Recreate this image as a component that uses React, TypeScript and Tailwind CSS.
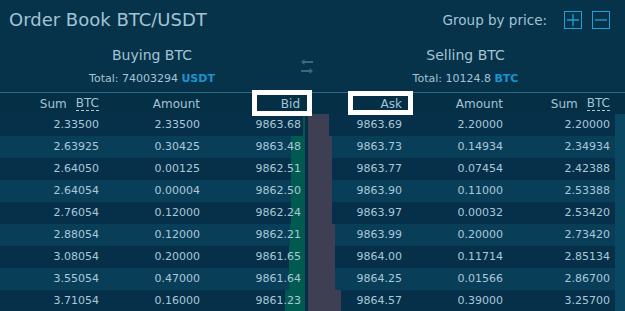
import React from "react";

const bids = [
  { sum: "2.33500", amount: "2.33500", price: "9863.68", depth: 2 },
  { sum: "2.63925", amount: "0.30425", price: "9863.48", depth: 14 },
  { sum: "2.64050", amount: "0.00125", price: "9862.51", depth: 14 },
  { sum: "2.64054", amount: "0.00004", price: "9862.50", depth: 14 },
  { sum: "2.76054", amount: "0.12000", price: "9862.24", depth: 14 },
  { sum: "2.88054", amount: "0.12000", price: "9862.21", depth: 15 },
  { sum: "3.08054", amount: "0.20000", price: "9861.65", depth: 16 },
  { sum: "3.55054", amount: "0.47000", price: "9861.64", depth: 16 },
  { sum: "3.71054", amount: "0.16000", price: "9861.23", depth: 20 },
];

const asks = [
  { price: "9863.69", amount: "2.20000", sum: "2.20000", depth: 21 },
  { price: "9863.73", amount: "0.14934", sum: "2.34934", depth: 24 },
  { price: "9863.77", amount: "0.07454", sum: "2.42388", depth: 24 },
  { price: "9863.90", amount: "0.11000", sum: "2.53388", depth: 24 },
  { price: "9863.97", amount: "0.00032", sum: "2.53420", depth: 24 },
  { price: "9863.99", amount: "0.20000", sum: "2.73420", depth: 27 },
  { price: "9864.00", amount: "0.11714", sum: "2.85134", depth: 27 },
  { price: "9864.25", amount: "0.01566", sum: "2.86700", depth: 27 },
  { price: "9864.57", amount: "0.39000", sum: "3.25700", depth: 33 },
];

const SwapIcon = () => (
  <svg width="14" height="16" viewBox="0 0 14 16" fill="none" className="shrink-0">
    <path d="M13 4H2" stroke="#3f677b" strokeWidth="2" />
    <path d="M4.5 1L1 4L4.5 7Z" fill="#3f677b" />
    <path d="M1 13H12" stroke="#3f677b" strokeWidth="2" />
    <path d="M9.5 10L13 13L9.5 16Z" fill="#3f677b" />
  </svg>
);

const SumBtc = () => (
  <span className="inline-flex items-center gap-[9px]">
    <span>Sum</span>
    <span className="border-b border-dashed border-[#a9c8da] leading-[14px]">BTC</span>
  </span>
);

export default function App() {
  return (
    <div
      className="relative w-[625px] h-[311px] overflow-hidden bg-[#06334a] text-[#a3c3d6]"
      style={{ fontFamily: '"DejaVu Sans", Verdana, sans-serif' }}
    >
      {/* top bar */}
      <div className="flex h-[40px] items-center justify-between pl-[9px] pr-[15px]">
        <h1 className="text-[18px] leading-none pb-[1px]">Order Book BTC/USDT</h1>
        <div className="flex items-center">
          <span className="text-[13.5px] mr-[17px]">Group by price:</span>
          <button className="flex h-[18px] w-[18px] items-center justify-center border-[1.5px] border-[#19a3da] mr-[10px]">
            <svg width="12" height="12" viewBox="0 0 12 12">
              <path d="M6 0V12M0 6H12" stroke="#19a3da" strokeWidth="1.3" />
            </svg>
          </button>
          <button className="flex h-[18px] w-[18px] items-center justify-center border-[1.5px] border-[#19a3da]">
            <svg width="12" height="12" viewBox="0 0 12 12">
              <path d="M0 6H12" stroke="#19a3da" strokeWidth="1.3" />
            </svg>
          </button>
        </div>
      </div>

      {/* totals */}
      <div className="flex h-[52px]">
        <div className="w-[304px] flex flex-col items-center pt-[6px]">
          <div className="text-[14px] leading-[18px]">Buying BTC</div>
          <div className="text-[11px] leading-[14px] mt-[8px]">
            Total: 74003294 <span className="font-bold text-[#1a93cf]">USDT</span>
          </div>
        </div>
        <div className="w-[6px] flex justify-center pt-[18px]">
          <SwapIcon />
        </div>
        <div className="w-[311px] flex flex-col items-center pt-[6px]">
          <div className="text-[14px] leading-[18px]">Selling BTC</div>
          <div className="text-[11px] leading-[14px] mt-[8px]">
            Total: 10124.8 <span className="font-bold text-[#1a93cf]">BTC</span>
          </div>
        </div>
      </div>

      {/* table */}
      <div className="border-t border-[#2f6c88] text-[12px]">
        <div className="flex h-[21px] items-center bg-[#052f45]">
          <div className="w-[308px] grid grid-cols-[101px_101px_101px]">
            <div className="text-right pr-[2px]"><SumBtc /></div>
            <div className="text-right pr-[2px]">Amount</div>
            <div className="text-right pr-[3px]">Bid</div>
          </div>
          <div className="w-[307px] grid grid-cols-[96px_101px_110px]">
            <div className="text-right pr-[2px]">Ask</div>
            <div className="text-right pr-[2px]">Amount</div>
            <div className="text-right pr-[5px]"><SumBtc /></div>
          </div>
        </div>

        <div className="flex">
          <div className="w-[615px] text-[11px] text-[#a9c8da]">
            {bids.map((b, i) => {
              const a = asks[i];
              return (
                <div
                  key={i}
                  className={`flex h-[22px] items-center ${i % 2 === 0 ? "bg-[#06304a]" : "bg-[#093e58]"}`}
                >
                  <div className="relative h-full w-[308px] grid grid-cols-[101px_101px_101px] items-center">
                    <div className="absolute inset-y-0 right-0 w-[3px] bg-[#062f45]" />
                    <div
                      className="absolute inset-y-0 right-[3px] bg-[#015a50]"
                      style={{ width: b.depth }}
                    />
                    <div className="relative text-right pr-[2px]">{b.sum}</div>
                    <div className="relative text-right pr-[2px]">{b.amount}</div>
                    <div className="relative text-right pr-[2px]">{b.price}</div>
                  </div>
                  <div className="relative h-full w-[307px] grid grid-cols-[96px_101px_110px] items-center">
                    <div
                      className="absolute inset-y-0 left-0 bg-[#3e3f52]"
                      style={{ width: a.depth }}
                    />
                    <div className="relative text-right pr-[2px]">{a.price}</div>
                    <div className="relative text-right pr-[2px]">{a.amount}</div>
                    <div className="relative text-right pr-[5px]">{a.sum}</div>
                  </div>
                </div>
              );
            })}
          </div>
          <div className="w-[10px] bg-[#0a4762]" />
        </div>
      </div>

      {/* highlight boxes */}
      <div className="absolute left-[252px] top-[90px] h-[26px] w-[60px] border-[5px] border-white" />
      <div className="absolute left-[348px] top-[91px] h-[24px] w-[65px] border-[5px] border-white" />
    </div>
  );
}
